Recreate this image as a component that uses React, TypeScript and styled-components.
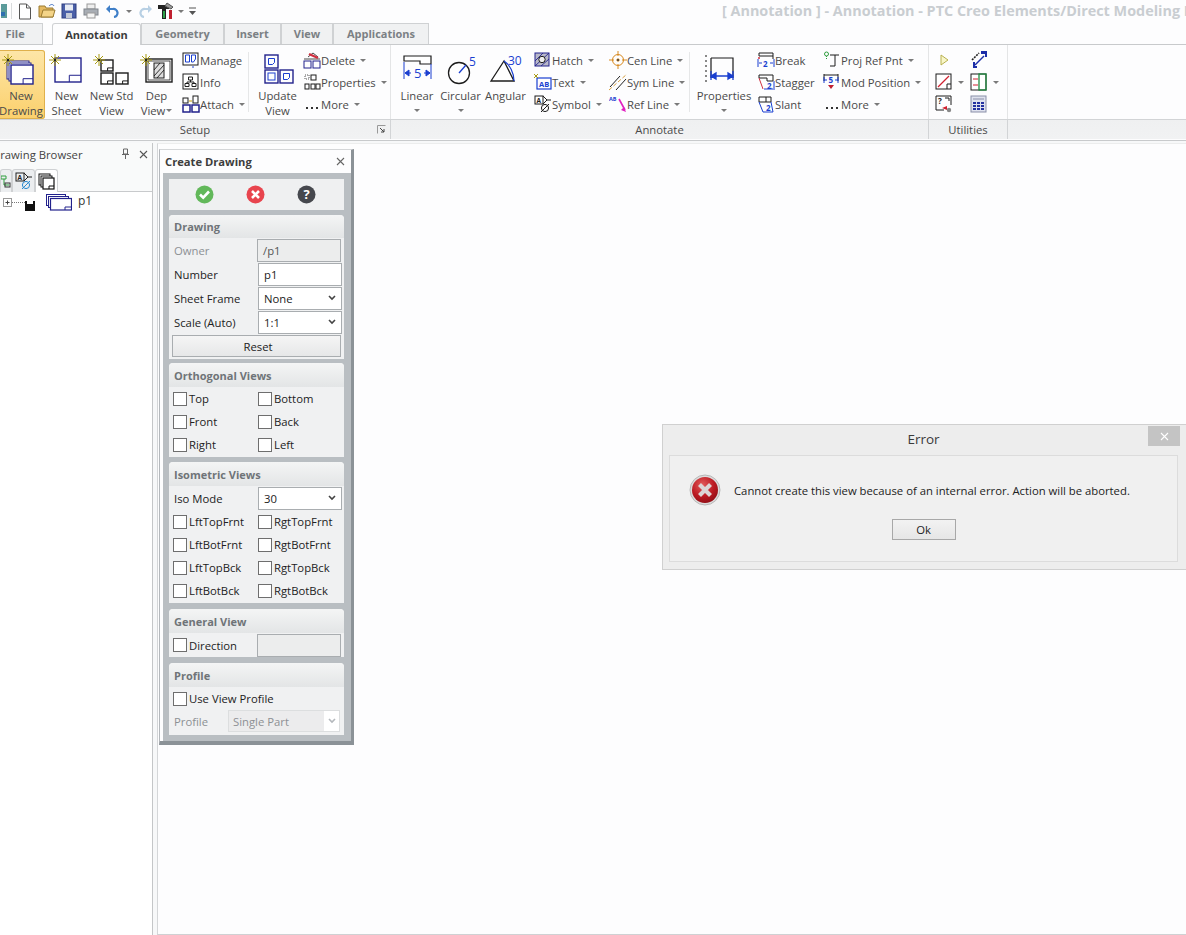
import React from "react";
import styled, { createGlobalStyle } from "styled-components";

const NAVY = "#22228c";
const BLUE = "#1a3fd0";
const INK = "#1c1c1c";
const OLIVE = "#a89a10";
const TEXT_SIZE = "11.3px";
const BOLD_SIZE = "11px";

const Global = createGlobalStyle`
  html, body { margin: 0; padding: 0; background: #fdfdfe; }
  body { font-family: "Open Sans", "Noto Sans", "Liberation Sans", sans-serif; font-size: ${TEXT_SIZE}; color: #333; }
`;

const Page = styled.div`
  position: relative;
  width: 1186px;
  height: 935px;
  overflow: hidden;
  display: flex;
  flex-direction: column;
  background: #f7f8f9;
`;

/* title bar + quick access */
const TitleBar = styled.div`
  height: 22px;
  flex: none;
  display: flex;
  align-items: center;
  background: #fdfdfe;
  white-space: nowrap;
`;
const Quick = styled.div`
  width: 722px;
  flex: none;
  display: flex;
  align-items: center;
  height: 20px;
`;
const QuickSlot = styled.span<{ $w: number }>`
  width: ${(p) => p.$w}px;
  flex: none;
  display: flex;
  justify-content: center;
  align-items: center;
`;
const TitleText = styled.div`
  font-size: 14.4px;
  font-weight: 700;
  color: #c9cdd1;
  padding-bottom: 2px;
`;

/* tabs */
const TabRow = styled.div`
  height: 22px;
  flex: none;
  display: flex;
  align-items: flex-end;
  background: #fdfdfe;
  border-bottom: 1px solid #c8cacc;
  box-sizing: content-box;
`;
const Tab = styled.div<{ $w: number; $active?: boolean; $gap?: number; $inset?: number }>`
  width: ${(p) => p.$w}px;
  margin-left: ${(p) => p.$gap ?? 0}px;
  padding: 0 ${(p) => p.$inset ?? 0}px 1px 0;
  height: ${(p) => (p.$active ? 22 : 21)}px;
  box-sizing: border-box;
  display: flex;
  align-items: center;
  justify-content: center;
  font-weight: 700;
  font-size: ${BOLD_SIZE};
  color: ${(p) => (p.$active ? "#3c3c3c" : "#7b8084")};
  background: ${(p) => (p.$active ? "#fdfdfe" : "#f0f1f2")};
  border: 1px solid #cfd1d3;
  border-bottom: none;
  border-radius: ${(p) => (p.$active ? "3px 3px 0 0" : "0")};
  margin-bottom: ${(p) => (p.$active ? "-1px" : "0")};
  position: relative;
`;

/* ribbon */
const Ribbon = styled.div`
  height: 95px;
  flex: none;
  display: flex;
  background: #fdfdfe;
  border-bottom: 1px solid #c8cacc;
`;
const Group = styled.div<{ $w?: number }>`
  ${(p) => (p.$w ? `width: ${p.$w}px; flex: none;` : "flex: 1;")}
  display: flex;
  flex-direction: column;
  box-sizing: border-box;
`;
const GroupBody = styled.div<{ $pad?: number; $edge?: boolean }>`
  height: 74px;
  flex: none;
  display: flex;
  padding-top: 4px;
  padding-left: ${(p) => p.$pad ?? 0}px;
  box-sizing: border-box;
  border-right: ${(p) => (p.$edge ? "1px solid #e4e5e6" : "none")};
`;
const GroupFoot = styled.div<{ $edge?: boolean }>`
  height: 20px;
  flex: none;
  position: relative;
  display: flex;
  align-items: center;
  justify-content: center;
  box-sizing: border-box;
  padding-bottom: 1px;
  background: linear-gradient(#eff0f1, #f1f2f3);
  border-top: 1px solid #d2d4d6;
  border-right: ${(p) => (p.$edge ? "1px solid #d2d4d6" : "none")};
  color: #4a4a4a;
  font-size: ${TEXT_SIZE};
`;
const Launcher = styled.span`
  position: absolute;
  right: 4px;
  top: 5px;
  display: flex;
`;
const Large = styled.div<{ $w: number; $gap?: number; $on?: boolean }>`
  width: ${(p) => p.$w}px;
  height: 69px;
  flex: none;
  margin-top: 1px;
  margin-left: ${(p) => p.$gap ?? 0}px;
  box-sizing: border-box;
  display: flex;
  flex-direction: column;
  align-items: center;
  padding-top: 2px;
  border-radius: 3px;
  color: #4a4a4a;
  background: ${(p) => (p.$on ? "linear-gradient(#fde6a8, #fbd06c)" : "transparent")};
  box-shadow: ${(p) => (p.$on ? "inset 0 0 0 1px #dfb04c" : "none")};
`;
const LargeLabel = styled.div`
  line-height: 15px;
  font-size: ${TEXT_SIZE};
  text-align: center;
  white-space: nowrap;
  height: 15px;
  display: flex;
  align-items: center;
  justify-content: center;
`;
const Column = styled.div<{ $w: number; $gap?: number }>`
  width: ${(p) => p.$w}px;
  margin-left: ${(p) => p.$gap ?? 0}px;
  flex: none;
  display: flex;
  flex-direction: column;
`;
const Small = styled.div`
  height: 22px;
  display: flex;
  align-items: center;
  white-space: nowrap;
  color: #4a4a4a;
  font-size: ${TEXT_SIZE};
`;
const SmallIcon = styled.span`
  width: 19px;
  flex: none;
  display: flex;
  justify-content: center;
`;
const Caret = styled.span<{ $gap?: number }>`
  display: inline-block;
  flex: none;
  margin-left: ${(p) => p.$gap ?? 5}px;
  border-left: 3px solid transparent;
  border-right: 3px solid transparent;
  border-top: 3px solid #7a7a7a;
`;
const Sep = styled.div<{ $gap: number }>`
  width: 1px;
  height: 60px;
  margin: 3px 0 0 ${(p) => p.$gap}px;
  background: #e6e7e8;
  flex: none;
`;
const UtilGrid = styled.div`
  display: grid;
  grid-template-columns: 35px 35px;
  grid-auto-rows: 22px;
  padding-left: 6px;
`;
const UtilCell = styled.div`
  display: flex;
  align-items: center;
`;

/* work area */
const Work = styled.div`
  flex: 1;
  min-height: 0;
  display: flex;
  padding-top: 2px;
`;
const Browser = styled.div`
  width: 153px;
  flex: none;
  background: #ffffff;
  border-right: 1px solid #c4c6c8;
  box-sizing: border-box;
`;
const BrowserHead = styled.div`
  height: 24px;
  display: flex;
  align-items: center;
  justify-content: space-between;
  box-sizing: border-box;
  padding: 0 4px 2px 0;
  color: #444;
  font-size: ${TEXT_SIZE};
  background: #f9fafa;
`;
const BrowserTitle = styled.span`
  margin-left: -8px;
  white-space: nowrap;
`;
const HeadTools = styled.span`
  display: flex;
  gap: 9px;
  align-items: center;
`;
const ToolStrip = styled.div`
  height: 25px;
  display: flex;
  align-items: flex-end;
  border-bottom: 1px solid #c8cacc;
  background: #f9fafa;
  box-sizing: border-box;
`;
const ToolTab = styled.div<{ $w: number; $on?: boolean }>`
  width: ${(p) => p.$w}px;
  height: 23px;
  box-sizing: border-box;
  display: flex;
  justify-content: center;
  align-items: center;
  background: ${(p) => (p.$on ? "#ffffff" : "#eceef0")};
  border: 1px solid #cfd1d3;
  border-bottom: none;
  border-radius: 3px 3px 0 0;
  margin-bottom: -1px;
  position: relative;
`;
const TreeRow = styled.div`
  display: flex;
  align-items: flex-start;
  padding: 1px 0 0 3px;
  height: 22px;
  font-size: 12px;
  color: #333;
`;
const TreeLabel = styled.span`
  margin-left: 6px;
  line-height: 16px;
`;
const Canvas = styled.div`
  flex: 1;
  margin: 0 0 0 4px;
  padding: 5px 0 0 1px;
  background: #fdfdfe;
  border-left: 1px solid #d4d6d8;
  border-bottom: 1px solid #cfd1d3;
  border-top: 1px solid #eceded;
`;

/* create drawing panel */
const Panel = styled.div`
  width: 195px;
  box-sizing: border-box;
  background: #fdfdfe;
  border-left: 1px solid #b4b8bc;
  border-top: 1px solid #d4d6d8;
  border-right: 3px solid #8b9297;
  border-bottom: 4px solid #8b9297;
`;
const PanelHead = styled.div`
  height: 23px;
  display: flex;
  align-items: center;
  justify-content: space-between;
  padding: 0 6px 0 5px;
  box-sizing: border-box;
  font-weight: 700;
  font-size: 11.2px;
  color: #3d3d3d;
`;
const PanelBody = styled.div`
  margin-left: 3px;
  background: #b9bec2;
  padding: 6px 7px 6px 6px;
`;
const Actions = styled.div`
  height: 31px;
  box-sizing: border-box;
  padding-right: 2px;
  display: grid;
  grid-template-columns: repeat(3, 51px);
  justify-content: center;
  align-items: center;
  justify-items: center;
  background: #eff0f1;
`;
const Section = styled.div<{ $top: number }>`
  margin-top: ${(p) => p.$top}px;
  background: #f0f1f2;
  border-radius: 4px 4px 0 0;
  overflow: hidden;
`;
const SectionHead = styled.div<{ $h?: number }>`
  height: ${(p) => p.$h ?? 24}px;
  display: flex;
  align-items: center;
  padding-left: 5px;
  font-weight: 700;
  font-size: ${BOLD_SIZE};
  color: #6f7478;
  background: linear-gradient(#f4f5f5, #e3e5e6);
`;
const FormRow = styled.div`
  height: 24px;
  display: flex;
  align-items: center;
  padding-left: 5px;
  box-sizing: border-box;
`;
const ProfileRow = styled(FormRow)`
  margin: -2px 0 2px;
`;
const FieldLabel = styled.span<{ $w?: number; $muted?: boolean }>`
  width: ${(p) => p.$w ?? 83}px;
  flex: none;
  color: ${(p) => (p.$muted ? "#8c9094" : "#222")};
  font-size: ${TEXT_SIZE};
  white-space: nowrap;
`;
const Field = styled.div<{ $w?: number; $off?: boolean }>`
  width: ${(p) => p.$w ?? 85}px;
  height: 23px;
  box-sizing: border-box;
  display: flex;
  align-items: center;
  justify-content: space-between;
  padding: 0 5px;
  font-size: ${TEXT_SIZE};
  color: ${(p) => (p.$off ? "#555" : "#222")};
  background: ${(p) => (p.$off ? "#eceded" : "#ffffff")};
  border: 1px solid #a9adb0;
`;
const ProfileField = styled.div`
  width: 112px;
  height: 22px;
  box-sizing: border-box;
  display: flex;
  align-items: center;
  justify-content: space-between;
  padding-right: 3px;
  background: #ffffff;
  border: 1px solid #dcdedf;
  font-size: ${TEXT_SIZE};
  color: #8c9094;
`;
const ProfileValue = styled.span`
  flex: 1;
  height: 100%;
  margin-right: 4px;
  padding-left: 4px;
  display: flex;
  align-items: center;
  background: #ececed;
`;
const ResetButton = styled.div`
  height: 22px;
  margin: 1px 3px 2px;
  padding-left: 3px;
  display: flex;
  align-items: center;
  justify-content: center;
  color: #222;
  font-size: ${TEXT_SIZE};
  background: linear-gradient(#f5f5f5, #e6e7e8);
  border: 1px solid #a9adb0;
  box-sizing: border-box;
`;
const CheckGrid = styled.div`
  display: grid;
  grid-template-columns: 85px 85px;
  grid-auto-rows: 23px;
  padding: 0 0 1px 4px;
`;
const CheckItem = styled.label`
  display: flex;
  align-items: center;
  color: #222;
  font-size: ${TEXT_SIZE};
  white-space: nowrap;
`;
const DirectionCheck = styled(CheckItem)`
  width: 84px;
  margin-left: -1px;
  flex: none;
`;
const Box = styled.span`
  width: 12px;
  height: 12px;
  flex: none;
  margin-right: 2px;
  background: #ffffff;
  border: 1px solid #6e6e6e;
`;

/* error dialog */
const Dialog = styled.div`
  position: absolute;
  left: 662px;
  top: 424px;
  width: 530px;
  height: 146px;
  box-sizing: border-box;
  background: #ededed;
  border: 1px solid #d0d0d0;
  display: flex;
  flex-direction: column;
  padding: 0 13px 7px 6px;
`;
const DialogTitle = styled.div`
  height: 30px;
  flex: none;
  box-sizing: border-box;
  padding-bottom: 2px;
  display: flex;
  align-items: center;
  justify-content: center;
  font-size: 13.5px;
  color: #3a3a3a;
`;
const DialogClose = styled.div`
  position: absolute;
  left: 485px;
  top: 1px;
  width: 32px;
  height: 20px;
  display: flex;
  align-items: center;
  justify-content: center;
  background: #c4c4c4;
`;
const DialogInner = styled.div`
  flex: 1;
  background: #f0f0f0;
  border: 1px solid #dcdcdc;
  display: flex;
  flex-direction: column;
  align-items: center;
  padding-top: 18px;
`;
const MessageRow = styled.div`
  width: 100%;
  display: flex;
  align-items: center;
  padding-left: 19px;
  box-sizing: border-box;
  color: #222;
  font-size: ${TEXT_SIZE};
  white-space: nowrap;
`;
const MessageText = styled.span`
  margin-left: 13px;
`;
const OkButton = styled.div`
  width: 64px;
  height: 21px;
  margin-top: 13px;
  box-sizing: border-box;
  display: flex;
  align-items: center;
  justify-content: center;
  color: #222;
  font-size: ${TEXT_SIZE};
  background: linear-gradient(#f2f2f2, #e6e6e6);
  border: 1px solid #a8a8a8;
`;

/* drawings */
const LargeCanvas = styled.svg`
  flex: none;
  margin-bottom: -4px;
`;
const Burst = ({ x, y }: { x: number; y: number }) => (
  <g stroke={OLIVE} strokeWidth="1">
    <path d={`M${x - 6} ${y}H${x + 6}M${x} ${y - 6}V${y + 6}M${x - 4} ${y - 4}L${x + 4} ${y + 4}M${x + 4} ${y - 4}L${x - 4} ${y + 4}`} />
    <circle cx={x} cy={y} r="1.2" fill="#222" stroke="none" />
  </g>
);
const LargeSvg = ({ children, w = 44 }: { children: React.ReactNode; w?: number }) => (
  <LargeCanvas width={w} height="40" viewBox={`0 0 ${w} 40`} fill="none">
    {children}
  </LargeCanvas>
);
const Sheet = ({ x, y, w, h, c = NAVY, sw = 1.4 }: { x: number; y: number; w: number; h: number; c?: string; sw?: number }) => (
  <g>
    <rect x={x} y={y} width={w} height={h} fill="#fff" stroke={c} strokeWidth={sw} />
    <path d={`M${x + w * 0.55} ${y + h}V${y + h * 0.72}H${x + w}`} stroke={c} strokeWidth="1" />
  </g>
);
const IconNewDrawing = () => (
  <LargeSvg>
    <Sheet x={8} y={9} w={22} h={18} sw={1} />
    <Sheet x={10} y={11} w={22} h={18} sw={1} />
    <Sheet x={12} y={13} w={22} h={19} />
    <Burst x={9} y={8} />
  </LargeSvg>
);
const IconNewSheet = () => (
  <LargeSvg>
    <Sheet x={10} y={6} w={26} h={24} />
    <Burst x={10} y={8} />
  </LargeSvg>
);
const IconNewStd = () => (
  <LargeSvg>
    <Sheet x={11} y={8} w={12} h={11} c={INK} />
    <Sheet x={11} y={21} w={12} h={11} c={INK} />
    <Sheet x={26} y={21} w={12} h={11} c={INK} />
    <Burst x={9} y={8} />
  </LargeSvg>
);
const IconDep = () => (
  <LargeSvg>
    <rect x="11" y="7" width="26" height="23" stroke={INK} strokeWidth="1.4" fill="#fff" />
    <rect x="13" y="9" width="22" height="19" stroke={INK} strokeWidth="0.8" />
    <rect x="19" y="11" width="10" height="15" stroke={INK} fill="#ddd" />
    <path d="M19 18l6-7M19 24l10-11M22 26l7-8" stroke={INK} strokeWidth="0.9" />
    <Burst x={11} y={8} />
  </LargeSvg>
);
const IconUpdate = () => (
  <LargeSvg>
    <rect x="9" y="3" width="13" height="13" stroke={NAVY} strokeWidth="1.4" />
    <path d="M12.5 6.5h6v4l-2 2h-4z" stroke={BLUE} />
    <rect x="9" y="18" width="13" height="13" stroke={NAVY} strokeWidth="1.4" />
    <rect x="12" y="21" width="7" height="7" stroke={BLUE} />
    <rect x="24" y="18" width="13" height="13" stroke={NAVY} strokeWidth="1.4" />
    <path d="M27.5 21.5h6v4l-2 2h-4z" stroke={BLUE} />
  </LargeSvg>
);
const IconLinear = () => (
  <LargeSvg w={42}>
    <path d="M8 4H35V12H24V9H8z" stroke={INK} strokeWidth="1.2" fill="#fff" />
    <path d="M8 10V27M35 12V27" stroke={BLUE} />
    <path d="M9 21h6M28 21h6M9 21l4-3v6zM34 21l-4-3v6z" stroke={BLUE} fill={BLUE} />
    <text x="18" y="26" fill={BLUE} fontSize="13" fontFamily="Open Sans">5</text>
  </LargeSvg>
);
const IconCircular = () => (
  <LargeSvg w={45}>
    <circle cx="21" cy="21" r="10.5" stroke={INK} strokeWidth="1.3" fill="#fff" />
    <path d="M21 21L28 13" stroke={BLUE} strokeWidth="1.3" />
    <text x="31" y="14" fill={BLUE} fontSize="12" fontFamily="Open Sans">5</text>
  </LargeSvg>
);
const IconAngular = () => (
  <LargeSvg w={45}>
    <path d="M8 29L21 9L31 29z" stroke={INK} strokeWidth="1.3" fill="#fff" />
    <path d="M21 9C27 13 31 21 31 29" stroke={BLUE} strokeWidth="1.2" />
    <text x="25" y="13" fill={BLUE} fontSize="12" fontFamily="Open Sans">30</text>
  </LargeSvg>
);
const IconProps = () => (
  <LargeSvg w={56}>
    <path d="M10 3V30" stroke="#888" strokeWidth="2" strokeDasharray="2 3" />
    <path d="M15 6H37V26M15 6V26" stroke={INK} strokeWidth="1.2" />
    <path d="M16 24H36M15 24l5-3v6zM37 24l-5-3v6zM15 19v9M37 19v9" stroke={BLUE} fill={BLUE} strokeWidth="1.3" />
  </LargeSvg>
);
const Svg18 = ({ children }: { children: React.ReactNode }) => (
  <svg width="18" height="18" viewBox="0 0 18 18" fill="none">
    {children}
  </svg>
);
const IManage = () => (
  <Svg18>
    <rect x="1" y="2" width="15" height="12" fill="#fff" stroke={INK} />
    <path d="M3.5 4h4v7h-4zM9.5 4h4v4l-2 3h-2z" stroke={BLUE} />
    <path d="M11 15v2" stroke={BLUE} />
  </Svg18>
);
const IInfo = () => (
  <Svg18>
    <rect x="1" y="1" width="15" height="15" fill="#fff" stroke={INK} />
    <path d="M6.5 4h4v3h-4zM3 10.5h4v3H3zM10 10.5h4v3h-4zM8.5 7v2M5 10.5V9h7v1.5" stroke={INK} />
  </Svg18>
);
const IAttach = () => (
  <Svg18>
    <rect x="1" y="3" width="5" height="5" stroke={INK} />
    <rect x="11" y="1" width="5" height="7" stroke={INK} />
    <rect x="1" y="10" width="7" height="7" stroke={NAVY} strokeWidth="1.5" />
    <rect x="10" y="10" width="7" height="7" stroke={NAVY} strokeWidth="1.5" />
    <path d="M7 6h3" stroke="#c9a000" />
  </Svg18>
);
const IDelete = () => (
  <Svg18>
    <rect x="1" y="10" width="7" height="7" stroke={NAVY} />
    <rect x="10" y="10" width="7" height="7" stroke={NAVY} />
    <path d="M1 8h16M5 6l5-4 5 4" stroke={INK} strokeWidth="0.8" />
    <path d="M6 3l9 4" stroke="#d03040" strokeWidth="2.4" />
  </Svg18>
);
const IProps = () => (
  <Svg18>
    <rect x="2" y="2" width="4" height="4" stroke="#555" strokeDasharray="1 1" />
    <rect x="8" y="2" width="5" height="5" stroke={INK} />
    <rect x="2" y="11" width="4" height="5" stroke={INK} />
    <rect x="8" y="11" width="4" height="5" stroke={INK} />
    <rect x="13" y="11" width="4" height="5" stroke={INK} />
  </Svg18>
);
const IMore = () => (
  <Svg18>
    <path d="M3 12h2v2H3zM8 12h2v2H8zM13 12h2v2h-2z" fill="#333" />
  </Svg18>
);
const IHatch = () => (
  <Svg18>
    <rect x="1" y="2" width="14" height="13" fill="#b8b8c8" stroke={NAVY} />
    <path d="M1 10l8-8M1 15l14-13M7 15l8-7" stroke={NAVY} strokeWidth="0.9" />
    <circle cx="8" cy="8.5" r="3.2" fill="#eee" stroke={INK} />
  </Svg18>
);
const IText = () => (
  <Svg18>
    <rect x="3" y="5" width="14" height="11" stroke={BLUE} strokeWidth="1.2" />
    <text x="5" y="14" fontSize="7.5" fontWeight="700" fill={BLUE} fontFamily="Open Sans">AB</text>
    <path d="M0 1l4 4M4 1L0 5" stroke={OLIVE} />
  </Svg18>
);
const ISymbol = () => (
  <Svg18>
    <rect x="1" y="1" width="8" height="8" stroke={INK} fill="#fff" />
    <text x="2.6" y="7.5" fontSize="6.5" fontWeight="700" fill={INK} fontFamily="Open Sans">A</text>
    <path d="M9 1l4 4-4 4M13 5h4" stroke={INK} />
    <circle cx="11" cy="13" r="3.6" stroke={INK} />
    <path d="M7 17l8-8" stroke={INK} />
  </Svg18>
);
const ICenLine = () => (
  <Svg18>
    <circle cx="9" cy="9" r="5.5" stroke="#d88a20" />
    <path d="M9 0v5M9 7v4M9 13v5M0 9h5M7 9h4M13 9h5" stroke="#d88a20" />
    <circle cx="9" cy="9" r="1" fill="#333" />
  </Svg18>
);
const ISymLine = () => (
  <Svg18>
    <path d="M1 14L11 3M7 17L17 6" stroke="#222" />
    <path d="M0 17L18 1" stroke="#d8a040" strokeDasharray="4 2" />
  </Svg18>
);
const IRefLine = () => (
  <Svg18>
    <text x="0" y="6" fontSize="5.5" fontWeight="700" fill={BLUE} fontFamily="Open Sans">AB</text>
    <path d="M10 4l6 11" stroke="#e020c0" strokeWidth="1.6" />
    <path d="M17 17l-5-2 3-3z" fill="#e020c0" />
  </Svg18>
);
const IBreak = () => (
  <Svg18>
    <path d="M2 2h14v6M2 2v3h14" stroke={INK} />
    <path d="M1 8v8M17 8v8M2 12l3 0M16 12h-3" stroke={BLUE} />
    <text x="6" y="16" fontSize="8" fontWeight="700" fill={BLUE} fontFamily="Open Sans">2</text>
    <circle cx="2" cy="7" r="1" fill="#d03040" />
  </Svg18>
);
const IStagger = () => (
  <Svg18>
    <path d="M2 2h14v6h-6V5H2z" stroke={INK} />
    <path d="M2 5l4 11" stroke="#d03040" />
    <path d="M7 16h9M17 8v9" stroke={BLUE} />
    <text x="10" y="15.5" fontSize="8" fontWeight="700" fill={BLUE} fontFamily="Open Sans">2</text>
  </Svg18>
);
const ISlant = () => (
  <Svg18>
    <path d="M2 2h12v5H2zM9 2v5" stroke={INK} />
    <path d="M2 7l4 10h10L14 7" stroke={BLUE} />
    <text x="9" y="16" fontSize="8" fontWeight="700" fill={BLUE} fontFamily="Open Sans">2</text>
  </Svg18>
);
const IProjRef = () => (
  <Svg18>
    <circle cx="3.5" cy="3" r="2" stroke="#2f9e3f" />
    <path d="M3.5 5v4" stroke="#2f9e3f" strokeDasharray="1 1" />
    <path d="M7 4h9M12 4v11M7 15h5" stroke={INK} />
  </Svg18>
);
const IModPos = () => (
  <Svg18>
    <path d="M1 1v7M15 1v7M1 2h14" stroke={INK} />
    <path d="M1 4v6M15 4v6M1 7h3M12 7h3" stroke={BLUE} />
    <text x="5.5" y="10" fontSize="8" fontWeight="700" fill={BLUE} fontFamily="Open Sans">5</text>
    <path d="M5 12h6l-3 4z" fill="#c02030" />
  </Svg18>
);
const UArrow = () => (
  <Svg18>
    <path d="M6 4l7 5-7 5z" fill="#f8f6c8" stroke="#b8b050" />
  </Svg18>
);
const UMove = () => (
  <Svg18>
    <path d="M2 9l7-7" stroke="#222" strokeDasharray="2 1" strokeWidth="1.6" />
    <path d="M11 0h6v6h-2V3h-4z" fill="#1c2ea8" />
    <path d="M3 17V11h2v4h2v2z" fill="#1c2ea8" />
    <path d="M5 14l9-9" stroke="#1c2ea8" strokeWidth="1.5" />
  </Svg18>
);
const ULine = () => (
  <Svg18>
    <rect x="1" y="1" width="15" height="15" stroke={INK} fill="#fff" />
    <path d="M3 14L14 3" stroke="#d02030" strokeWidth="1.3" />
    <path d="M12 16v-5h4" stroke={INK} />
  </Svg18>
);
const UFrame = () => (
  <Svg18>
    <rect x="1" y="1" width="15" height="16" stroke={INK} fill="#fff" />
    <rect x="9" y="1" width="7" height="16" stroke="#1f8a40" strokeWidth="1.3" />
    <path d="M3 6h5M3 12h5" stroke="#d02030" />
  </Svg18>
);
const UQuery = () => (
  <Svg18>
    <path d="M1 15V1h15v9" stroke={INK} />
    <path d="M1 15h8" stroke={INK} />
    <text x="3" y="9" fontSize="8" fontWeight="700" fill={INK} fontFamily="Open Sans">?</text>
    <path d="M10 3h4v3" stroke={INK} />
    <path d="M7 13l5-2v4z" fill="#d02030" />
    <circle cx="14" cy="15" r="2.2" fill="#888" />
  </Svg18>
);
const UTable = () => (
  <Svg18>
    <rect x="1" y="1" width="15" height="16" fill="#dfe2ee" stroke="#8a8fa8" />
    <path d="M3 4h11" stroke="#8a8fa8" />
    <path d="M3 7h3v2H3zM7 7h3v2H7zM11 7h3v2h-3zM3 10h3v2H3zM7 10h3v2H7zM11 10h3v2h-3zM3 13h3v2H3zM7 13h3v2H7zM11 13h3v2h-3z" fill="#2432a0" />
  </Svg18>
);
const CrossMark = ({ c = "#555", s = 9 }: { c?: string; s?: number }) => (
  <svg width={s} height={s} viewBox="0 0 9 9">
    <path d="M1 1l7 7M8 1L1 8" stroke={c} strokeWidth="1.1" />
  </svg>
);
const PinMark = () => (
  <svg width="9" height="12" viewBox="0 0 9 12" fill="none">
    <path d="M2.5 1h4v5h-4zM1 6.5h7M4.5 7v4" stroke="#666" />
  </svg>
);
const FieldChevron = ({ c = "#444" }: { c?: string }) => (
  <svg width="8" height="6" viewBox="0 0 8 6" fill="none">
    <path d="M1 1l3 3 3-3" stroke={c} strokeWidth="1.6" />
  </svg>
);
const RoundBadge = ({ fill, children }: { fill: string; children: React.ReactNode }) => (
  <svg width="19" height="19" viewBox="0 0 19 19">
    <circle cx="9.5" cy="9.5" r="9" fill={fill} />
    {children}
  </svg>
);
const ErrorIcon = () => (
  <svg width="32" height="32" viewBox="0 0 32 32">
    <defs>
      <radialGradient id="errFill" cx="40%" cy="30%" r="75%">
        <stop offset="0" stopColor="#e25a5a" />
        <stop offset="0.6" stopColor="#bb1a22" />
        <stop offset="1" stopColor="#8f0f16" />
      </radialGradient>
    </defs>
    <circle cx="16" cy="16" r="15" fill="#dcdcdc" stroke="#b8b8b8" />
    <circle cx="16" cy="16" r="13" fill="url(#errFill)" />
    <path d="M10.5 10.5l11 11M21.5 10.5l-11 11" stroke="#dcd6d6" strokeWidth="4.2" />
  </svg>
);

/* quick access icons */
const QApp = () => (
  <svg width="12" height="16" viewBox="0 0 12 16">
    <rect x="-4" y="1" width="10" height="14" fill="#5a9a9a" />
    <rect x="-2" y="9" width="6" height="4" fill="#2f6fb0" />
    <path d="M10.5 0v16" stroke="#d8dadc" />
  </svg>
);
const QNew = () => (
  <svg width="14" height="17" viewBox="0 0 14 17" fill="none">
    <path d="M1.5 1h7l4 4v11h-11z" fill="#fff" stroke="#555" />
    <path d="M8.5 1v4h4" stroke="#555" />
  </svg>
);
const QOpen = () => (
  <svg width="18" height="16" viewBox="0 0 18 16">
    <path d="M1 3h6l1 2h7v9H1z" fill="#e5b960" stroke="#9a7a30" />
    <path d="M3 14l2-7h12l-2 7z" fill="#f4d488" stroke="#9a7a30" />
    <path d="M11 3c2-2 4-2 5 0" stroke="#3f6fc0" fill="none" />
  </svg>
);
const QSave = () => (
  <svg width="16" height="16" viewBox="0 0 16 16">
    <rect x="1" y="1" width="14" height="14" fill="#4a5fa8" stroke="#2f3f80" />
    <rect x="4" y="1.5" width="8" height="6" fill="#e8ecf4" />
    <rect x="5" y="10" width="6" height="5" fill="#c4cad8" />
  </svg>
);
const QPrint = () => (
  <svg width="16" height="16" viewBox="0 0 16 16">
    <rect x="4" y="1" width="8" height="5" fill="#eee" stroke="#999" />
    <rect x="1" y="6" width="14" height="6" fill="#a8adb4" stroke="#80858c" />
    <rect x="4" y="10" width="8" height="5" fill="#f4f4f4" stroke="#999" />
  </svg>
);
const QUndo = () => (
  <svg width="14" height="14" viewBox="0 0 14 14" fill="none">
    <path d="M3 5h5a4 4 0 0 1 1 8" stroke="#3f7fc8" strokeWidth="2.2" />
    <path d="M5 1L1 5l4 4z" fill="#3f7fc8" />
  </svg>
);
const QRedo = () => (
  <svg width="14" height="14" viewBox="0 0 14 14" fill="none">
    <path d="M11 5H6a4 4 0 0 0-1 8" stroke="#b8d0e4" strokeWidth="2.2" />
    <path d="M9 1l4 4-4 4z" fill="#b8d0e4" />
  </svg>
);
const QTools = () => (
  <svg width="17" height="18" viewBox="0 0 17 18">
    <path d="M0 3h11v4H8v10H4V7H0z" fill="#222" />
    <path d="M9 1l6 4-2 2-6-3z" fill="#999" stroke="#555" />
    <rect x="11" y="8" width="3" height="9" fill="#c02030" />
    <rect x="5" y="9" width="2" height="7" fill="#2fa04a" />
  </svg>
);
const QCustom = () => (
  <svg width="7" height="9" viewBox="0 0 7 9">
    <path d="M0 1h7" stroke="#555" />
    <path d="M0 4h7L3.5 8z" fill="#555" />
  </svg>
);

const labels = (a: string, b?: React.ReactNode) => (
  <>
    <LargeLabel>{a}</LargeLabel>
    <LargeLabel>{b}</LargeLabel>
  </>
);

const SmallBtn = ({ icon, text, caret }: { icon: React.ReactNode; text: string; caret?: boolean }) => (
  <Small>
    <SmallIcon>{icon}</SmallIcon>
    {text}
    {caret && <Caret />}
  </Small>
);

const Check = ({ text }: { text: string }) => (
  <CheckItem>
    <Box />
    {text}
  </CheckItem>
);

export default function App() {
  return (
    <Page>
      <Global />
      <TitleBar>
        <Quick>
          <QuickSlot $w={14}><QApp /></QuickSlot>
          <QuickSlot $w={22}><QNew /></QuickSlot>
          <QuickSlot $w={22}><QOpen /></QuickSlot>
          <QuickSlot $w={22}><QSave /></QuickSlot>
          <QuickSlot $w={22}><QPrint /></QuickSlot>
          <QuickSlot $w={20}><QUndo /></QuickSlot>
          <QuickSlot $w={14}><Caret $gap={0} /></QuickSlot>
          <QuickSlot $w={20}><QRedo /></QuickSlot>
          <QuickSlot $w={20}><QTools /></QuickSlot>
          <QuickSlot $w={10}><Caret $gap={0} /></QuickSlot>
          <QuickSlot $w={12}><QCustom /></QuickSlot>
        </Quick>
        <TitleText>[ Annotation ] - Annotation - PTC Creo Elements/Direct Modeling Express</TitleText>
      </TitleBar>

      <TabRow>
        <Tab $w={44} $gap={-1} $inset={12}>File</Tab>
        <Tab $w={89} $gap={9} $active>Annotation</Tab>
        <Tab $w={83}>Geometry</Tab>
        <Tab $w={57}>Insert</Tab>
        <Tab $w={52}>View</Tab>
        <Tab $w={96}>Applications</Tab>
      </TabRow>

      <Ribbon>
        <Group $w={391}>
          <GroupBody $edge>
            <Large $w={48} $gap={-3} $on>
              <IconNewDrawing />
              {labels("New", "Drawing")}
            </Large>
            <Large $w={43}>
              <IconNewSheet />
              {labels("New", "Sheet")}
            </Large>
            <Large $w={47}>
              <IconNewStd />
              {labels("New Std", "View")}
            </Large>
            <Large $w={43}>
              <IconDep />
              {labels("Dep", <>View<Caret $gap={1} /></>)}
            </Large>
            <Column $w={65} $gap={3}>
              <SmallBtn icon={<IManage />} text="Manage" />
              <SmallBtn icon={<IInfo />} text="Info" />
              <SmallBtn icon={<IAttach />} text="Attach" caret />
            </Column>
            <Sep $gap={2} />
            <Large $w={45} $gap={6}>
              <IconUpdate />
              {labels("Update", "View")}
            </Large>
            <Column $w={86} $gap={2}>
              <SmallBtn icon={<IDelete />} text="Delete" caret />
              <SmallBtn icon={<IProps />} text="Properties" caret />
              <SmallBtn icon={<IMore />} text="More" caret />
            </Column>
          </GroupBody>
          <GroupFoot $edge>
            Setup
            <Launcher>
              <svg width="9" height="9" viewBox="0 0 9 9" fill="none">
                <path d="M0.5 8.5V0.5H8.5" stroke="#999" />
                <path d="M3 3l4 4M7 4v3H4" stroke="#444" />
              </svg>
            </Launcher>
          </GroupFoot>
        </Group>

        <Group $w={538}>
          <GroupBody $pad={5} $edge>
            <Large $w={42}>
              <IconLinear />
              {labels("Linear", <Caret $gap={0} />)}
            </Large>
            <Large $w={45}>
              <IconCircular />
              {labels("Circular", <Caret $gap={0} />)}
            </Large>
            <Large $w={45}>
              <IconAngular />
              {labels("Angular")}
            </Large>
            <Column $w={75} $gap={5}>
              <SmallBtn icon={<IHatch />} text="Hatch" caret />
              <SmallBtn icon={<IText />} text="Text" caret />
              <SmallBtn icon={<ISymbol />} text="Symbol" caret />
            </Column>
            <Column $w={81}>
              <SmallBtn icon={<ICenLine />} text="Cen Line" caret />
              <SmallBtn icon={<ISymLine />} text="Sym Line" caret />
              <SmallBtn icon={<IRefLine />} text="Ref Line" caret />
            </Column>
            <Sep $gap={0} />
            <Large $w={56} $gap={6}>
              <IconProps />
              {labels("Properties", <Caret $gap={0} />)}
            </Large>
            <Column $w={66} $gap={4}>
              <SmallBtn icon={<IBreak />} text="Break" />
              <SmallBtn icon={<IStagger />} text="Stagger" />
              <SmallBtn icon={<ISlant />} text="Slant" />
            </Column>
            <Column $w={104}>
              <SmallBtn icon={<IProjRef />} text="Proj Ref Pnt" caret />
              <SmallBtn icon={<IModPos />} text="Mod Position" caret />
              <SmallBtn icon={<IMore />} text="More" caret />
            </Column>
          </GroupBody>
          <GroupFoot $edge>Annotate</GroupFoot>
        </Group>

        <Group $w={79}>
          <GroupBody $edge>
            <UtilGrid>
              <UtilCell><UArrow /></UtilCell>
              <UtilCell><UMove /></UtilCell>
              <UtilCell><ULine /><Caret /></UtilCell>
              <UtilCell><UFrame /><Caret /></UtilCell>
              <UtilCell><UQuery /></UtilCell>
              <UtilCell><UTable /></UtilCell>
            </UtilGrid>
          </GroupBody>
          <GroupFoot $edge>Utilities</GroupFoot>
        </Group>

        <Group>
          <GroupBody />
          <GroupFoot />
        </Group>
      </Ribbon>

      <Work>
        <Browser>
          <BrowserHead>
            <BrowserTitle>Drawing Browser</BrowserTitle>
            <HeadTools>
              <PinMark />
              <CrossMark />
            </HeadTools>
          </BrowserHead>
          <ToolStrip>
            <ToolTab $w={12}>
              <svg width="10" height="16" viewBox="0 0 10 16" fill="none">
                <path d="M0 3h5v3H0zM3 6v6h5" stroke="#2f9e3f" />
                <rect x="4" y="10" width="5" height="4" stroke="#333" />
              </svg>
            </ToolTab>
            <ToolTab $w={23}>
              <svg width="18" height="18" viewBox="0 0 18 18" fill="none">
                <rect x="1" y="1" width="8" height="8" stroke="#222" />
                <text x="2.6" y="7.5" fontSize="6.5" fontWeight="700" fill="#222" fontFamily="Open Sans">A</text>
                <path d="M9 1l4 4-4 4M13 5h4" stroke="#222" />
                <circle cx="11" cy="13" r="3.6" stroke="#2a8ad0" />
                <path d="M7 17l8-8" stroke="#2a8ad0" />
              </svg>
            </ToolTab>
            <ToolTab $w={23} $on>
              <svg width="17" height="17" viewBox="0 0 17 17" fill="none">
                <rect x="1" y="1" width="11" height="11" stroke="#111" fill="#fff" />
                <rect x="3" y="3" width="11" height="11" stroke="#111" fill="#fff" />
                <rect x="5" y="5" width="11" height="11" stroke="#111" strokeWidth="1.2" fill="#fff" />
                <path d="M11 16v-3h5" stroke="#111" />
              </svg>
            </ToolTab>
          </ToolStrip>
          <TreeRow>
            <svg width="69" height="20" viewBox="0 0 69 20" fill="none">
              <rect x="0.5" y="5.5" width="8" height="8" stroke="#9a9a9a" fill="#fff" />
              <path d="M2.5 9.5h4M4.5 7.5v4" stroke="#444" />
              <path d="M9 9.5h13" stroke="#777" strokeDasharray="1 1" />
              <rect x="22" y="8" width="10" height="10" fill="#111" />
              <rect x="24" y="8" width="6" height="3" fill="#fff" />
              <rect x="43.5" y="1.5" width="19" height="11" stroke={NAVY} fill="#fff" />
              <rect x="45.5" y="3.5" width="20" height="11" stroke={NAVY} fill="#fff" />
              <rect x="47.5" y="5.5" width="21" height="11.5" stroke={NAVY} strokeWidth="1.2" fill="#fff" />
              <path d="M62 17v-3h6.5" stroke={NAVY} />
            </svg>
            <TreeLabel>p1</TreeLabel>
          </TreeRow>
        </Browser>

        <Canvas>
          <Panel>
            <PanelHead>
              Create Drawing
              <CrossMark c="#666" />
            </PanelHead>
            <PanelBody>
              <Actions>
                <RoundBadge fill="#62b85a">
                  <path d="M5 9.5l3.2 3.2L14 6.5" stroke="#fff" strokeWidth="2.6" fill="none" />
                </RoundBadge>
                <RoundBadge fill="#e8444e">
                  <path d="M6 6l7 7M13 6l-7 7" stroke="#fff" strokeWidth="2.6" />
                </RoundBadge>
                <RoundBadge fill="#46484e">
                  <text x="9.5" y="14" textAnchor="middle" fontSize="13" fontWeight="700" fill="#fff" fontFamily="Open Sans">?</text>
                </RoundBadge>
              </Actions>

              <Section $top={5}>
                <SectionHead $h={23}>Drawing</SectionHead>
                <FormRow>
                  <FieldLabel $muted>Owner</FieldLabel>
                  <Field $off $w={84}>/p1</Field>
                </FormRow>
                <FormRow>
                  <FieldLabel $w={84}>Number</FieldLabel>
                  <Field $w={84}>p1</Field>
                </FormRow>
                <FormRow>
                  <FieldLabel $w={84}>Sheet Frame</FieldLabel>
                  <Field $w={84}>None<FieldChevron /></Field>
                </FormRow>
                <FormRow>
                  <FieldLabel $w={84}>Scale (Auto)</FieldLabel>
                  <Field $w={84}>1:1<FieldChevron /></Field>
                </FormRow>
                <ResetButton>Reset</ResetButton>
              </Section>

              <Section $top={4}>
                <SectionHead>Orthogonal Views</SectionHead>
                <CheckGrid>
                  <Check text="Top" />
                  <Check text="Bottom" />
                  <Check text="Front" />
                  <Check text="Back" />
                  <Check text="Right" />
                  <Check text="Left" />
                </CheckGrid>
              </Section>

              <Section $top={5}>
                <SectionHead>Isometric Views</SectionHead>
                <FormRow>
                  <FieldLabel $w={84}>Iso Mode</FieldLabel>
                  <Field $w={84}>30<FieldChevron /></Field>
                </FormRow>
                <CheckGrid>
                  <Check text="LftTopFrnt" />
                  <Check text="RgtTopFrnt" />
                  <Check text="LftBotFrnt" />
                  <Check text="RgtBotFrnt" />
                  <Check text="LftTopBck" />
                  <Check text="RgtTopBck" />
                  <Check text="LftBotBck" />
                  <Check text="RgtBotBck" />
                </CheckGrid>
              </Section>

              <Section $top={6}>
                <SectionHead>General View</SectionHead>
                <FormRow>
                  <DirectionCheck as="span">
                    <Box />
                    Direction
                  </DirectionCheck>
                  <Field $off $w={84} />
                </FormRow>
              </Section>

              <Section $top={6}>
                <SectionHead>Profile</SectionHead>
                <CheckGrid>
                  <Check text="Use View Profile" />
                </CheckGrid>
                <ProfileRow>
                  <FieldLabel $w={54} $muted>Profile</FieldLabel>
                  <ProfileField>
                    <ProfileValue>Single Part</ProfileValue>
                    <FieldChevron c="#b4b8bc" />
                  </ProfileField>
                </ProfileRow>
              </Section>
            </PanelBody>
          </Panel>
        </Canvas>
      </Work>

      <Dialog>
        <DialogTitle>Error</DialogTitle>
        <DialogClose>
          <CrossMark c="#fff" />
        </DialogClose>
        <DialogInner>
          <MessageRow>
            <ErrorIcon />
            <MessageText>Cannot create this view because of an internal error. Action will be aborted.</MessageText>
          </MessageRow>
          <OkButton>Ok</OkButton>
        </DialogInner>
      </Dialog>
    </Page>
  );
}
